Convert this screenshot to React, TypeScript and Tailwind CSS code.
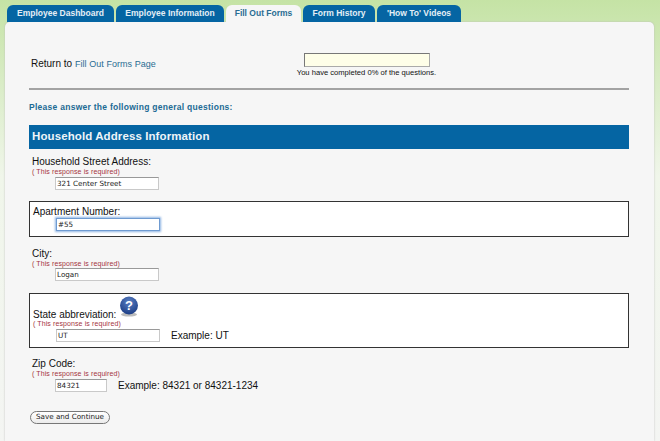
import React from 'react';

const font = "font-['Liberation_Sans',Arial,sans-serif]";

const tabs = [
  { label: 'Employee Dashboard', width: 'w-[107px]' },
  { label: 'Employee Information', width: 'w-[108px]' },
  { label: 'Fill Out Forms', width: 'w-[75px]', active: true },
  { label: 'Form History', width: 'w-[72px]' },
  { label: "'How To' Videos", width: 'w-[84px]' },
];

const Required = () => (
  <div className="text-[7px] leading-[9px] tracking-[0.1px] text-[#a5343f]">( This response is required)</div>
);

const Label = ({ children }: { children: React.ReactNode }) => (
  <div className="-mb-[1px] pt-[1px] text-[10px] leading-[12px]">{children}</div>
);

const Field = ({ value, width = 'w-[104px]', focused = false }: { value: string; width?: string; focused?: boolean }) => (
  <input
    readOnly
    value={value}
    className={`${width} block h-[13px] bg-white pl-[1px] font-['DejaVu_Sans',sans-serif] text-[7.2px] text-[#222] outline-none ${
      focused
        ? 'border border-[#6f9bd1] shadow-[0_0_2px_1px_#8fb4e3]'
        : 'border border-[#c9c9c9] border-t-[#999]'
    }`}
  />
);

const HelpIcon = () => (
  <svg width="20" height="21" viewBox="0 0 20 21" className="block">
    <defs>
      <radialGradient id="help" cx="50%" cy="30%" r="70%">
        <stop offset="0%" stopColor="#5a80c4" />
        <stop offset="100%" stopColor="#1c3d85" />
      </radialGradient>
    </defs>
    <ellipse cx="10" cy="18.5" rx="8" ry="2" fill="#bbb" />
    <circle cx="10" cy="9.5" r="9" fill="url(#help)" />
    <text x="10" y="14" textAnchor="middle" fontSize="13" fontWeight="700" fill="#fff" fontFamily="Liberation Sans">?</text>
  </svg>
);

export default function App() {
  return (
    <div className={`${font} h-[441px] w-[660px] overflow-hidden bg-gradient-to-b from-[#c5e3a5] from-0% via-[#f0f6ea] via-40% to-[#f4f5f3] text-[#111]`}>
      <div className="flex h-[22px] items-end gap-[2px] pl-[7px]">
        {tabs.map((t) => (
          <div
            key={t.label}
            className={`${t.width} flex h-[17px] items-center justify-center rounded-t-[6px] text-[8.5px] font-bold ${
              t.active ? 'bg-[#f6f6f6] text-[#2a6d93]' : 'bg-[#0565a3] text-[#e4eef5]'
            }`}
          >
            {t.label}
          </div>
        ))}
      </div>

      <div className="ml-[5px] h-[419px] w-[649px] rounded-t-[5px] bg-[#f6f6f6] pl-[24px] pr-[25px] shadow-[0_0_2px_#bbb]">
        <div className="flex h-[66px] items-start">
          <div className="mt-[36px] w-[275px] pl-[2px] text-[10px] leading-[12px]">
            Return to <span className="text-[9px] tracking-[0.05px] text-[#2a6d93]">Fill Out Forms Page</span>
          </div>
          <div className="flex w-[125px] flex-col items-center pt-[31px]">
            <div className="h-[14px] w-[126px] shrink-0 border border-[#777] border-r-[#aaa] border-b-[#aaa] bg-[#fefee8]" />
            <div className="mt-[1px] whitespace-nowrap text-[7.6px] leading-[10px]">You have completed 0% of the questions.</div>
          </div>
        </div>

        <div className="h-[1.5px] w-[600px] bg-[#a3a3a3]" />

        <div className="mt-[12px] text-[8.5px] font-bold leading-[10px] tracking-[0.27px] text-[#1c6a94]">
          Please answer the following general questions:
        </div>

        <div className="mt-[13px] flex h-[24px] w-[600px] items-center bg-[#0565a3] pl-[3px] text-[11.5px] font-bold tracking-[0.1px] text-[#eef4f8]">
          Household Address Information
        </div>

        <div className="mt-[6px] pl-[3px]">
          <Label>Household Street Address:</Label>
          <Required />
          <div className="mt-[1px] pl-[23px]"><Field value="321 Center Street" /></div>
        </div>

        <div className="mt-[11px] h-[36px] w-[600px] border border-[#333] bg-white pl-[3px] pt-[3px]">
          <div className="text-[10px] leading-[13px]">Apartment Number:</div>
          <div className="pl-[23px]"><Field value="#55" focused /></div>
        </div>

        <div className="mt-[10px] pl-[3px]">
          <Label>City:</Label>
          <Required />
          <div className="pl-[23px]"><Field value="Logan" /></div>
        </div>

        <div className="mt-[12px] h-[55px] w-[600px] border border-[#333] bg-white pl-[3px] pt-[3px]">
          <div className="flex h-[22px] items-end text-[10px] leading-[13px]">
            <span className="-mb-[2px]">State abbreviation:</span>
            <span className="ml-[3px] -mt-[1px] self-start"><HelpIcon /></span>
          </div>
          <Required />
          <div className="mt-[1px] flex items-center pl-[23px]">
            <Field value="UT" />
            <span className="ml-[11px] text-[10px] leading-[13px]">Example: UT</span>
          </div>
        </div>

        <div className="mt-[9px] pl-[3px]">
          <Label>Zip Code:</Label>
          <Required />
          <div className="mt-[1px] flex items-center pl-[23px]">
            <Field value="84321" width="w-[52px]" />
            <span className="ml-[11px] text-[10px] leading-[13px]">Example: 84321 or 84321-1234</span>
          </div>
        </div>

        <button className="mt-[19px] ml-[1px] flex h-[13px] w-[80px] items-center justify-center rounded-full border border-[#777] bg-gradient-to-b from-white to-[#ececec] font-['DejaVu_Sans',sans-serif] text-[7.2px] text-[#222]">
          Save and Continue
        </button>
      </div>
    </div>
  );
}
